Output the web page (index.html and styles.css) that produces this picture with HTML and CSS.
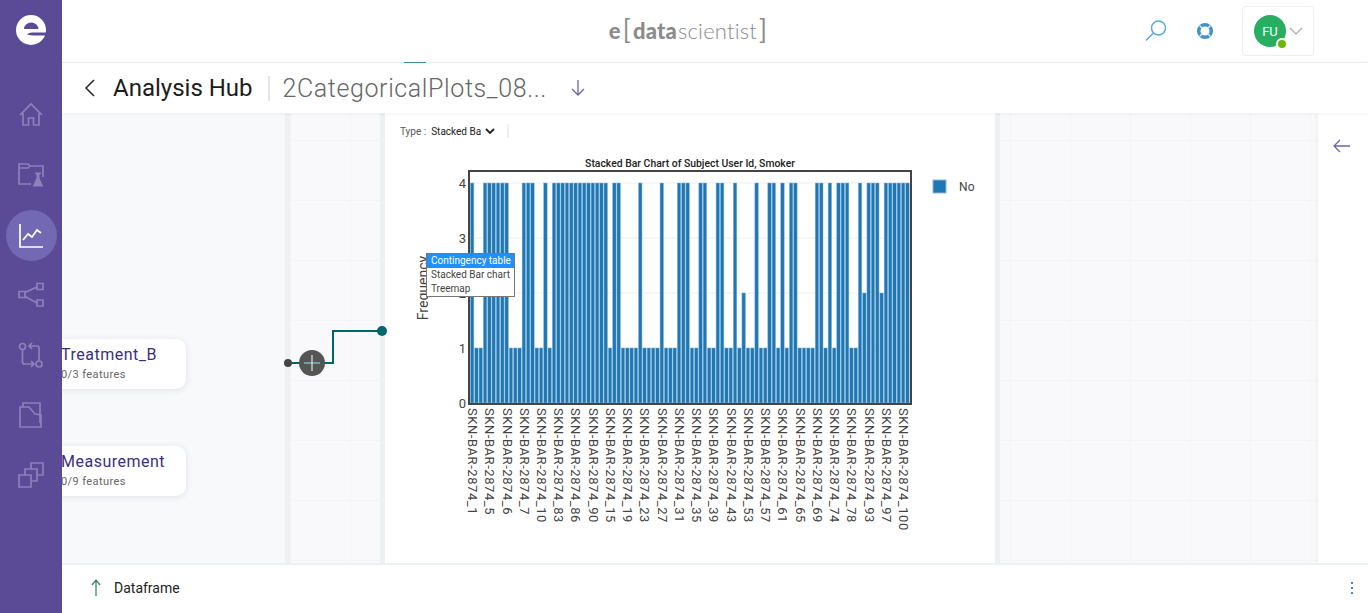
FILE: index.html
```html
<!DOCTYPE html>
<html lang="en">

<head>
    <meta charset="UTF-8">
    <title>Analysis Hub</title>
    <link rel="stylesheet" href="styles.css">
</head>

<body>
    <div class="app">
        <nav class="sidebar">
            <div class="logo">
                <svg width="30" height="30" viewBox="0 0 30 30">
                    <circle cx="15" cy="15" r="15" fill="#fff" />
                    <path d="M8 14a7.2 6.4 0 0 1 14.4 0z" fill="#5b4b97" />
                    <path d="M11 19.5q2-2 5-2h14v3h-12q-3 0-7-1z" fill="#5b4b97" />
                </svg>
            </div>
            <a class="nav-item">
                <svg class="nav-icon" viewBox="0 0 26 26">
                    <path d="M2 13 13 2l11 11M5 11v12h5.500v-7h5v7H21V11" />
                </svg>
            </a>
            <a class="nav-item">
                <svg class="nav-icon" viewBox="0 0 26 26">
                    <path d="M13 22H1V2h9l2 2h13v11M1 6h9l2-2" />
                    <path class="solid" d="M16.500 10h7v2.500h-1.500v3.500l4 9H14l4-9v-3.500h-1.500z" />
                </svg>
            </a>
            <a class="nav-item active">
                <svg class="nav-icon" viewBox="0 0 26 26">
                    <path d="M2 1v23h23M5 17l5-6 4 3 5-7 4 3" />
                </svg>
            </a>
            <a class="nav-item">
                <svg class="nav-icon" viewBox="0 0 26 26">
                    <path d="M1 9.500h6v6H1zM19 1.500h6v6h-6zM19 18h6v6h-6zM7 10.500 19 5M7 14.500 19 21" />
                </svg>
            </a>
            <a class="nav-item">
                <svg class="nav-icon" viewBox="0 0 26 26">
                    <circle cx="4.500" cy="4.500" r="3" />
                    <circle cx="21" cy="22" r="3" />
                    <path d="M4.500 8v12q0 2 2 2H16M13 19l3 3-3 3M21 18.500V6q0-2-2-2h-8M14 1l-3 3 3 3" />
                </svg>
            </a>
            <a class="nav-item">
                <svg class="nav-icon" viewBox="0 0 26 26">
                    <path d="M5 5V1h17v20M2 25V5h9l6 7 6 1v12z" />
                </svg>
            </a>
            <a class="nav-item">
                <svg class="nav-icon" viewBox="0 0 26 26">
                    <path d="M1 13h12v12H1zM7 13V7h12v12h-6M13 7V1h12v12h-6" />
                </svg>
            </a>
        </nav>

        <div class="content">
            <header class="topbar">
                <div class="brand">
                    <b>e</b><span class="bracket">[</span><b>data</b><span class="thin">scientist</span><span class="bracket">]</span>
                </div>
                <div class="top-actions">
                    <svg class="search-icon" width="24" height="24" viewBox="0 0 24 24">
                        <circle cx="14.500" cy="9" r="7" />
                        <path d="M9.500 14 2 21.500" />
                    </svg>
                    <svg class="help-icon" width="18" height="18" viewBox="0 0 18 18">
                        <circle cx="9" cy="9" r="6.300" />
                        <path class="help-cuts" d="M3.500 3.500 6 6M14.500 3.500 12 6M3.500 14.500 6 12M14.500 14.500 12 12" />
                    </svg>
                    <div class="user-box">
                        <div class="avatar">FU<span class="status"></span></div>
                        <svg class="user-chevron" width="14" height="8" viewBox="0 0 14 8">
                            <path d="M1 1l6 6 6-6" />
                        </svg>
                    </div>
                </div>
            </header>

            <div class="titlebar">
                <span class="tab-sliver"></span>
                <svg class="back" width="12" height="18" viewBox="0 0 12 18">
                    <path d="M10 1 2 9l8 8" />
                </svg>
                <h1 class="hub-title">Analysis Hub</h1>
                <span class="title-sep"></span>
                <span class="file-name">2CategoricalPlots_08...</span>
                <svg class="down-arrow" width="16" height="18" viewBox="0 0 16 18">
                    <path d="M8 1v15M2 10l6 6 6-6" />
                </svg>
            </div>

            <main class="workspace">
                <section class="nodes-area">
                    <div class="node-card node-treatment">
                        <div class="node-name">Treatment_B</div>
                        <div class="node-sub">0/3 features</div>
                    </div>
                    <div class="node-card node-measurement">
                        <div class="node-name">Measurement</div>
                        <div class="node-sub">0/9 features</div>
                    </div>
                </section>
                <div class="strip"></div>
                <section class="grid-area grid-small"></section>
                <div class="strip"></div>
                <section class="chart-panel">
                    <div class="chart-toolbar">
                        <span class="type-label">Type :</span>
                        <span class="type-value">Stacked Ba</span>
                        <svg class="type-chevron" width="10" height="7" viewBox="0 0 10 7">
                            <path d="M1 1l4 4 4-4" />
                        </svg>
                        <span class="toolbar-sep"></span>
                    </div>
                    <svg class="chart" id="chart" width="610" height="413" viewBox="385 150 610 413">
                        <text class="chart-title" x="690" y="167">Stacked Bar Chart of Subject User Id, Smoker</text>
                        <g id="gridlines"></g>
                        <g id="bars"></g>
                        <rect class="plot-frame" x="469" y="171" width="442" height="233" />
                        <g id="ylabels"></g>
                        <text class="axis-title" transform="translate(428 288) rotate(-90)">Frequency</text>
                        <g id="xlabels"></g>
                        <rect x="933" y="180" width="13" height="13" fill="#1f77b4" stroke="#8cb9db" />
                        <text class="legend-text" x="959" y="191">No</text>
                    </svg>
                    <ul class="chart-menu">
                        <li class="selected">Contingency table</li>
                        <li>Stacked Bar chart</li>
                        <li>Treemap</li>
                    </ul>
                </section>
                <div class="strip"></div>
                <section class="grid-area grid-wide"></section>
                <aside class="right-panel">
                    <svg width="18" height="14" viewBox="0 0 18 14">
                        <path d="M7 1 1 7l6 6M1 7h16" />
                    </svg>
                </aside>

                <svg class="connector" width="110" height="60" viewBox="280 320 110 60">
                    <path class="wire" d="M288 363H333V331H382" />
                    <circle cx="288" cy="363" r="4" fill="#444" />
                    <circle cx="382" cy="331" r="5" fill="#00666e" />
                    <circle cx="312" cy="363" r="13" fill="#555" />
                    <path class="plus-h" d="M304 363h16" />
                    <path class="plus-v" d="M312 355v16" />
                </svg>
            </main>

            <footer class="bottombar">
                <svg class="up-arrow" width="12" height="18" viewBox="0 0 12 18">
                    <path d="M6 17V1M2 6l4-5 4 5" />
                </svg>
                <span class="frame-label">Dataframe</span>
                <span class="dots"><i></i><i></i><i></i></span>
            </footer>
        </div>
    </div>
    <script src="chart.js"></script>
</body>

</html>
```

FILE: styles.css
```css
* {
    box-sizing: border-box;
}

html, body {
    margin: 0;
    height: 100%;
    overflow: hidden;
}

body {
    font-family: "Roboto", "Noto Sans", sans-serif;
    color: #222;
    background-color: #fff;
}

.app {
    display: flex;
    height: 613px;
}

/* sidebar */
.sidebar {
    width: 62px;
    flex-shrink: 0;
    background-color: #5b4b97;
    display: flex;
    flex-direction: column;
    align-items: center;
    position: relative;
    z-index: 3;
}

.logo {
    height: 62px;
    padding-top: 15px;
    margin-bottom: 23px;
}

.nav-item {
    width: 51px;
    height: 60px;
    display: flex;
    align-items: center;
    justify-content: center;
}

.nav-item.active {
    height: 51px;
    margin: 5px 0 4px;
    border-radius: 50%;
    background-color: #7268b3;
}

.nav-icon {
    width: 26px;
    height: 26px;
    fill: none;
    stroke: #8d80bb;
    stroke-width: 1.700;
}

.nav-icon .solid {
    fill: #8d80bb;
    stroke: #5b4b97;
    stroke-width: 1;
}

.nav-item.active .nav-icon {
    stroke: #fff;
}

/* top bar */
.content {
    flex: 1;
    min-width: 0;
    display: flex;
    flex-direction: column;
}

.topbar {
    height: 63px;
    flex-shrink: 0;
    border-bottom: 1px solid #eeeeee;
    display: flex;
    align-items: center;
    justify-content: center;
    position: relative;
}

.brand {
    font-family: "Lato", sans-serif;
    font-size: 22px;
    letter-spacing: 0.2px;
    color: #8c8c8c;
    display: flex;
    align-items: center;
    margin: -1px 52px 0 0;
}

.brand b {
    font-weight: 900;
}

.brand .thin {
    font-weight: 300;
    margin-left: 1px;
}

.brand .bracket {
    font-weight: 400;
    font-size: 26px;
    margin: -3px 2px 0;
}

.top-actions {
    position: absolute;
    right: 54px;
    top: 6px;
    display: flex;
    align-items: center;
}

.search-icon {
    fill: none;
    stroke: #5aa9d6;
    stroke-width: 1.500;
    margin-right: 28px;
}

.help-icon {
    fill: none;
    stroke: #4592c4;
    stroke-width: 3.500;
    margin-right: 28px;
}

.help-cuts {
    stroke: #e8f2f8;
    stroke-width: 1.300;
}

.user-box {
    width: 72px;
    height: 50px;
    border: 1px solid #eeeeee;
    border-radius: 4px;
    display: flex;
    align-items: center;
    padding-left: 11px;
}

.avatar {
    width: 32px;
    height: 32px;
    border-radius: 50%;
    background-color: #27ae60;
    color: #fff;
    font-size: 13px;
    display: flex;
    align-items: center;
    justify-content: center;
    position: relative;
}

.status {
    position: absolute;
    right: -2px;
    bottom: -3px;
    width: 12px;
    height: 12px;
    border-radius: 50%;
    background-color: #6db300;
    border: 2px solid #fff;
}

.user-chevron {
    margin-left: 3px;
    fill: none;
    stroke: #aaa;
    stroke-width: 1.200;
}

/* title bar */
.titlebar {
    height: 50px;
    flex-shrink: 0;
    display: flex;
    align-items: center;
    padding-left: 22px;
    background-color: #fff;
    box-shadow: 0 1px 4px rgba(0, 0, 0, 0.06);
    position: relative;
    z-index: 2;
}

.tab-sliver {
    position: absolute;
    left: 342px;
    top: -1px;
    width: 22px;
    height: 1px;
    background-color: #3f8f9b;
}

.back {
    fill: none;
    stroke: #222;
    stroke-width: 1.500;
}

.hub-title {
    margin: 0 0 0 17px;
    font-size: 24px;
    font-weight: 400;
    color: #1c1c1c;
}

.title-sep {
    width: 2px;
    height: 25px;
    margin: 0 13px 0 15px;
    background-color: #e2e6ea;
}

.file-name {
    font-size: 25px;
    font-weight: 300;
    color: #666;
    letter-spacing: 0.6px;
}

.down-arrow {
    margin-left: 23px;
    fill: none;
    stroke: #6f64ab;
    stroke-width: 1.300;
}

/* workspace */
.workspace {
    flex: 1;
    min-height: 0;
    display: flex;
    position: relative;
    overflow: hidden;
    background-color: #f8f9fa;
}

.nodes-area {
    width: 223px;
    flex-shrink: 0;
    position: relative;
}

.strip {
    width: 5px;
    flex-shrink: 0;
    background-color: #eef1f4;
}

.grid-area {
    background-color: #f9f9fb;
    background-image:
        linear-gradient(#f4f4f6 1px, transparent 1px),
        linear-gradient(90deg, #f4f4f6 1px, transparent 1px);
    background-size: 60px 60px;
    background-position: 0 27px;
}

.grid-small {
    width: 90px;
    flex-shrink: 0;
}

.grid-wide {
    flex: 1;
    background-position: 10px 27px;
}

.node-card {
    position: absolute;
    left: -10px;
    width: 134px;
    height: 50px;
    padding: 6px 0 0 9px;
    background-color: #fff;
    border-radius: 10px;
    box-shadow: 0 1px 6px rgba(60, 70, 110, 0.14);
}

.node-treatment {
    top: 226px;
}

.node-measurement {
    top: 333px;
}

.node-name {
    font-size: 16px;
    color: #3a2f80;
    letter-spacing: 0.5px;
    line-height: 20px;
}

.node-sub {
    font-size: 11px;
    color: #666;
    letter-spacing: 0.4px;
    line-height: 20px;
}

.connector {
    position: absolute;
    left: 218px;
    top: 207px;
}

.wire {
    fill: none;
    stroke: #00666e;
    stroke-width: 2;
}

.plus-h {
    stroke: #7fb5b5;
    stroke-width: 1.500;
}

.plus-v {
    stroke: #dcebeb;
    stroke-width: 1.200;
}

/* chart */
.chart-panel {
    width: 610px;
    flex-shrink: 0;
    background-color: #fff;
    position: relative;
}

.chart-toolbar {
    height: 37px;
    padding: 0 0 1px 15px;
    display: flex;
    align-items: center;
    font-size: 10px;
}

.type-label {
    color: #555;
}

.type-value {
    margin-left: 5px;
    color: #222;
}

.type-chevron {
    margin-left: 4px;
    fill: none;
    stroke: #222;
    stroke-width: 1.800;
}

.toolbar-sep {
    width: 2px;
    height: 14px;
    margin-left: 12px;
    background-color: #eeeeee;
}

.chart {
    display: block;
}

.chart text {
    font-family: "Roboto", sans-serif;
    fill: #444;
}

.chart .chart-title {
    font-size: 10.400px;
    font-weight: 500;
    text-anchor: middle;
    fill: #222;
}

.plot-frame {
    fill: none;
    stroke: #444;
    stroke-width: 2;
}

.grid-line {
    stroke: #eeeeee;
    stroke-width: 1;
}

.bar {
    fill: #1f77b4;
    stroke: #8cb9db;
    stroke-width: 0.500;
}

.chart .y-label {
    font-size: 13px;
    text-anchor: end;
}

.chart .x-label {
    font-size: 13px;
    letter-spacing: 0.55px;
}

.chart .axis-title {
    font-size: 14px;
    text-anchor: middle;
}

.chart .legend-text {
    font-size: 12px;
    letter-spacing: 0.3px;
}

.chart-menu {
    position: absolute;
    left: 41px;
    top: 140px;
    width: 89px;
    margin: 0;
    padding: 0;
    list-style: none;
    background-color: #fff;
    border: 1px solid #777;
    font-size: 10px;
    color: #444;
}

.chart-menu li {
    height: 14px;
    line-height: 14px;
    padding-left: 4px;
}

.chart-menu .selected {
    background-color: #1e90ff;
    color: #fff;
}

/* right panel and footer */
.right-panel {
    width: 50px;
    flex-shrink: 0;
    background-color: #fff;
    padding: 25px 0 0 15px;
    box-shadow: -2px 0 4px rgba(0, 0, 0, 0.03);
}

.right-panel svg {
    fill: none;
    stroke: #6f64ab;
    stroke-width: 1.300;
}

.bottombar {
    height: 50px;
    flex-shrink: 0;
    border-top: 2px solid #eef1f4;
    display: flex;
    align-items: center;
    padding: 0 0 2px 28px;
    position: relative;
}

.up-arrow {
    fill: none;
    stroke: #3d8a6a;
    stroke-width: 1.300;
}

.frame-label {
    margin-left: 12px;
    font-size: 14px;
    color: #222;
}

.dots {
    position: absolute;
    right: 15px;
    top: 17px;
    display: flex;
    flex-direction: column;
    gap: 3px;
}

.dots i {
    width: 2px;
    height: 2px;
    background-color: #3f8f9b;
}
```

FILE: chart.js
```js
// bars with frequency 4, the rest are 1 except the three with 2
var altas = [0, 3, 4, 5, 6, 7, 8, 12, 13, 14, 17, 19, 20, 21, 22, 23, 24, 25, 26, 27, 28, 29, 30, 31,
    33, 34, 39, 44, 48, 49, 50, 53, 54, 57, 58, 61, 66, 69, 70, 72, 74, 75, 80, 81, 83, 85, 86, 87,
    90, 92, 93, 94, 96, 97, 98, 99, 100, 101];
var medias = [63, 91, 95];
var etiquetas = [1, 5, 6, 7, 10, 83, 86, 90, 15, 19, 23, 27, 31, 35, 39, 43, 53, 57, 61, 65, 69, 74, 78, 93, 97, 100];

var NS = "http://www.w3.org/2000/svg";
var paso = 4.31;
var yCero = 403;
var altoUnidad = 55;

function crear(tag, clase, attrs, texto) {
    var el = document.createElementNS(NS, tag);
    el.setAttribute("class", clase);
    for (var k in attrs) {
        el.setAttribute(k, attrs[k]);
    }
    if (texto !== undefined) {
        el.textContent = texto;
    }
    return el;
}

var grid = document.getElementById("gridlines");
var ylabels = document.getElementById("ylabels");
[0, 1, 2, 3, 4].forEach(function (v) {
    var y = yCero - v * altoUnidad;
    grid.appendChild(crear("line", "grid-line", { x1: 470, x2: 910, y1: y, y2: y }));
    ylabels.appendChild(crear("text", "y-label", { x: 466, y: y + 5 }, v));
});

var bars = document.getElementById("bars");
for (var i = 0; i < 102; i++) {
    var valor = altas.indexOf(i) >= 0 ? 4 : (medias.indexOf(i) >= 0 ? 2 : 1);
    bars.appendChild(crear("rect", "bar", {
        x: (470 + i * paso + 0.4).toFixed(2),
        y: yCero - valor * altoUnidad,
        width: 3.5,
        height: valor * altoUnidad
    }));
}

var xlabels = document.getElementById("xlabels");
etiquetas.forEach(function (n, i) {
    var x = 468 + i * 4 * paso;
    xlabels.appendChild(crear("text", "x-label", {
        transform: "translate(" + x.toFixed(1) + " 408) rotate(90)"
    }, "SKN-BAR-2874_" + n));
});
```
